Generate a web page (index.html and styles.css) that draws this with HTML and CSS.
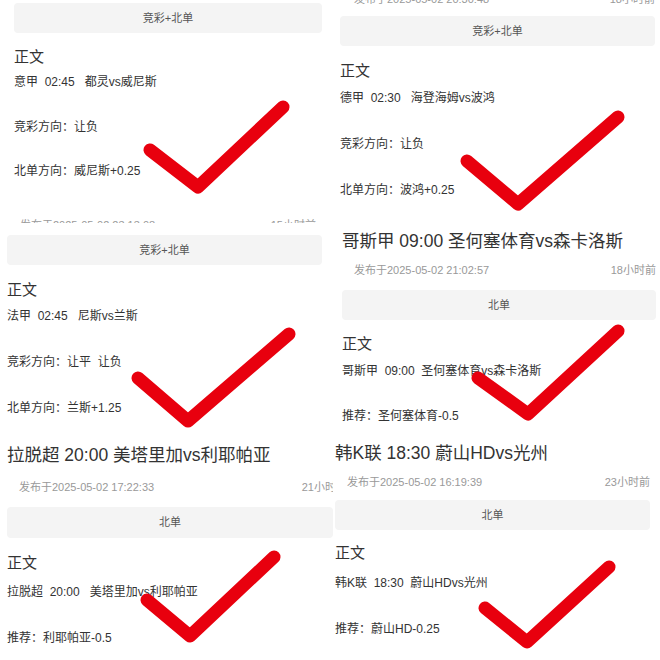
FILE: index.html
```html
<!DOCTYPE html>
<html lang="zh-CN">
<head>
    <meta charset="UTF-8">
    <title>红单合集</title>
    <link rel="stylesheet" href="styles.css">
</head>
<body>
    <div class="collage">
        <!-- 左列 -->
        <div class="col">
            <!-- 意甲 -->
            <div class="shot shot-l1">
                <div class="tag-bar">竞彩+北单</div>
                <div class="label">正文</div>
                <div class="match">意甲&nbsp;&nbsp;02:45&nbsp;&nbsp;&nbsp;都灵vs威尼斯</div>
                <div class="pick">竞彩方向：让负</div>
                <div class="pick">北单方向：威尼斯+0.25</div>
                <div class="meta meta-cut"><span>发布于2025-05-02 23:13:08</span><span>15小时前</span></div>
                <svg class="tick" viewBox="0 0 333 223"><polyline points="150,150 198,187 283,107"/></svg>
            </div>
            <!-- 法甲 -->
            <div class="shot shot-l2">
                <div class="tag-bar">竞彩+北单</div>
                <div class="label">正文</div>
                <div class="match">法甲&nbsp;&nbsp;02:45&nbsp;&nbsp;&nbsp;尼斯vs兰斯</div>
                <div class="pick">竞彩方向：让平&nbsp;&nbsp;让负</div>
                <div class="pick">北单方向：兰斯+1.25</div>
                <svg class="tick" viewBox="0 0 333 210"><polyline points="138,148 188,191 289,104"/></svg>
            </div>
            <!-- 拉脱超 -->
            <div class="shot shot-l3">
                <h2 class="headline">拉脱超 20:00 美塔里加vs利耶帕亚</h2>
                <div class="meta"><span>发布于2025-05-02 17:22:33</span><span>21小时前</span></div>
                <div class="tag-bar">北单</div>
                <div class="label">正文</div>
                <div class="match">拉脱超&nbsp;&nbsp;20:00&nbsp;&nbsp;&nbsp;美塔里加vs利耶帕亚</div>
                <div class="pick">推荐：利耶帕亚-0.5</div>
                <svg class="tick" viewBox="0 0 333 220"><polyline points="147,160 190,196 274,117"/></svg>
            </div>
        </div>

        <!-- 右列 -->
        <div class="col">
            <!-- 德甲 -->
            <div class="shot shot-r1">
                <div class="meta meta-top"><span>发布于2025-05-02 20:30:48</span><span>18小时前</span></div>
                <div class="tag-bar">竞彩+北单</div>
                <div class="label">正文</div>
                <div class="match">德甲&nbsp;&nbsp;02:30&nbsp;&nbsp;&nbsp;海登海姆vs波鸿</div>
                <div class="pick">竞彩方向：让负</div>
                <div class="pick">北单方向：波鸿+0.25</div>
                <svg class="tick" viewBox="0 0 327 222"><polyline points="134,161 185,204 285,117"/></svg>
            </div>
            <!-- 哥斯甲 -->
            <div class="shot shot-r2">
                <h2 class="headline">哥斯甲 09:00 圣何塞体育vs森卡洛斯</h2>
                <div class="meta"><span>发布于2025-05-02 21:02:57</span><span>18小时前</span></div>
                <div class="tag-bar">北单</div>
                <div class="label">正文</div>
                <div class="match">哥斯甲&nbsp;&nbsp;09:00&nbsp;&nbsp;圣何塞体育vs森卡洛斯</div>
                <div class="pick">推荐：圣何塞体育-0.5</div>
                <svg class="tick" viewBox="0 0 327 218"><polyline points="145,156 195,192 285,109"/></svg>
            </div>
            <!-- 韩K联 -->
            <div class="shot shot-r3">
                <h2 class="headline">韩K联 18:30 蔚山HDvs光州</h2>
                <div class="meta"><span>发布于2025-05-02 16:19:39</span><span>23小时前</span></div>
                <div class="tag-bar">北单</div>
                <div class="label">正文</div>
                <div class="match">韩K联&nbsp;&nbsp;18:30&nbsp;&nbsp;蔚山HDvs光州</div>
                <div class="pick">推荐：蔚山HD-0.25</div>
                <svg class="tick" viewBox="0 0 327 220"><polyline points="152,168 194,202 276,127"/></svg>
            </div>
        </div>
    </div>
</body>
</html>
```

FILE: styles.css
```css
/* 全局样式 */
body {
    margin: 0;
    background: #fff;
    font-family: "Liberation Sans", "Noto Sans CJK SC", sans-serif;
    color: #333;
}

/* 拼图布局 */
.collage {
    display: grid;
    grid-template-columns: 333px 327px;
    width: 660px;
    height: 660px;
    overflow: hidden;
}
.col {
    display: flex;
    flex-direction: column;
}

/* 单张截图 */
.shot {
    position: relative;
    overflow: hidden;
    flex: none;
    background: #fff;
}

/* 大标题 */
.headline {
    margin: 0;
    font-size: 17.5px;
    font-weight: normal;
    line-height: 24px;
    white-space: nowrap;
    color: #333;
}

/* 发布时间 */
.meta {
    display: flex;
    justify-content: space-between;
    font-size: 11px;
    line-height: 16px;
    color: #999;
    white-space: nowrap;
}

/* 灰色标签条 */
.tag-bar {
    height: 30px;
    line-height: 30px;
    background: #f4f4f4;
    border-radius: 4px;
    text-align: center;
    font-size: 11px;
    color: #555;
}

/* 正文 */
.label {
    font-size: 15px;
    line-height: 20px;
    margin-top: 14px;
}
.match,
.pick {
    font-size: 12px;
    line-height: 16px;
    white-space: nowrap;
}
.match {
    margin-top: 8px;
}
.pick {
    margin-top: 29px;
}

/* 红色对勾 */
.tick {
    position: absolute;
    left: 0;
    top: 0;
    width: 100%;
    height: 100%;
}
.tick polyline {
    fill: none;
    stroke: #e8000e;
    stroke-width: 13;
    stroke-linecap: round;
    stroke-linejoin: round;
}

/* 左列 */
.shot-l1 {
    height: 223px;
    padding: 3px 11px 0 14px;
    box-sizing: border-box;
}
.shot-l1 .match {
    margin-top: 7px;
}
.shot-l1 .pick + .pick {
    margin-top: 28px;
}
.meta-cut {
    margin-top: 38px;
    padding: 0 6px;
}

.shot-l2 {
    height: 210px;
    margin-top: 7px;
    padding: 5px 11px 0 7px;
    box-sizing: border-box;
}
.shot-l2 .label {
    margin-top: 15px;
}
.shot-l2 .pick {
    margin-top: 30px;
}

.shot-l3 {
    height: 220px;
    padding: 3px 0 0 7px;
    box-sizing: border-box;
}
.shot-l3 .meta {
    margin: 12px -14px 0 12px;
}
.shot-l3 .tag-bar {
    margin-top: 12px;
    height: 31px;
    line-height: 31px;
}
.shot-l3 .label {
    margin-top: 15px;
}
.shot-l3 .match {
    margin-top: 11px;
}
.shot-l3 .pick {
    margin-top: 30px;
}

/* 右列 */
.shot-r1 {
    height: 222px;
    padding: 0 5px 0 7px;
    box-sizing: border-box;
}
.meta-top {
    margin: -9px 0 0 14px;
}
.shot-r1 .tag-bar {
    margin-top: 9px;
}
.shot-r1 .label {
    margin-top: 15px;
}
.shot-r1 .match {
    margin-top: 9px;
}
.shot-r1 .pick {
    margin-top: 30px;
}

.shot-r2 {
    height: 218px;
    padding: 7px 4px 0 9px;
    box-sizing: border-box;
}
.shot-r2 .meta {
    margin: 9px 0 0 12px;
}
.shot-r2 .tag-bar {
    margin-top: 12px;
}
.shot-r2 .match {
    margin-top: 9px;
}

.shot-r3 {
    height: 220px;
    padding: 1px 10px 0 2px;
    box-sizing: border-box;
}
.shot-r3 .meta {
    margin: 9px 0 0 12px;
}
.shot-r3 .tag-bar {
    margin-top: 10px;
}
.shot-r3 .label {
    margin-top: 13px;
}
.shot-r3 .match {
    margin-top: 12px;
}
.shot-r3 .pick {
    margin-top: 30px;
}
```
